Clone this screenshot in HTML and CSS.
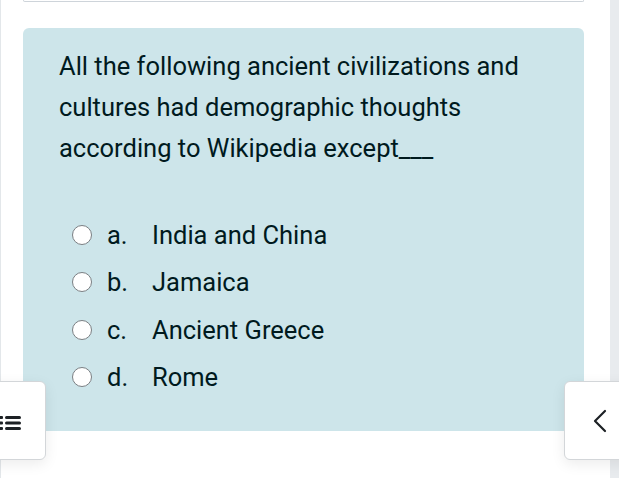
FILE: index.html
```html
<!DOCTYPE html>
<html>
<head>
<meta charset="utf-8">
<link rel="stylesheet" href="styles.css">
</head>
<body>
<div class="page">
  <div class="edge-left"></div>
  <main class="main">
    <div class="info-tail"></div>
    <div class="formulation">
      <div class="qtext">All the following ancient civilizations and cultures had demographic thoughts according to Wikipedia except___</div>
      <div class="answers">
        <div class="opt"><span class="radio"></span><span class="letter">a.</span><span class="label">India and China</span></div>
        <div class="opt"><span class="radio"></span><span class="letter">b.</span><span class="label">Jamaica</span></div>
        <div class="opt"><span class="radio"></span><span class="letter">c.</span><span class="label">Ancient Greece</span></div>
        <div class="opt"><span class="radio"></span><span class="letter">d.</span><span class="label">Rome</span></div>
      </div>
    </div>
  </main>
  <div class="edge-right"></div>
</div>
<button class="drawer-toggle toggle-left" aria-label="Open course index">
  <svg width="24" height="20" viewBox="0 0 24 20">
    <rect x="0" y="5" width="4" height="3" rx="1" fill="#1d2125"/>
    <rect x="0" y="10.5" width="4" height="3" rx="1" fill="#1d2125"/>
    <rect x="0" y="16" width="4" height="3" rx="1" fill="#1d2125"/>
    <rect x="6" y="5" width="16" height="3" rx="1.5" fill="#1d2125"/>
    <rect x="6" y="10.5" width="16" height="3" rx="1.5" fill="#1d2125"/>
    <rect x="6" y="16" width="16" height="3" rx="1.5" fill="#1d2125"/>
  </svg>
</button>
<button class="drawer-toggle toggle-right" aria-label="Open block drawer">
  <svg width="14" height="24" viewBox="0 0 14 24">
    <polyline points="12,2 2,12 12,22" fill="none" stroke="#1d2125" stroke-width="2.2" stroke-linecap="round" stroke-linejoin="round"/>
  </svg>
</button>
</body>
</html>
```

FILE: styles.css
```css
html, body {
  margin: 0;
  padding: 0;
  background: #ffffff;
  overflow: hidden;
}

body {
  width: 619px;
  height: 478px;
  font-family: Roboto, "Liberation Sans", sans-serif;
  color: #001a1e;
}

.page {
  display: flex;
  height: 478px;
}

.edge-left {
  width: 1px;
  flex: none;
  background: #e3e7ea;
}

.edge-right {
  width: 9px;
  flex: none;
  background: #e8ebee;
}

.main {
  flex: 1;
  padding: 0 26px 0 22px;
}

.info-tail {
  height: 1px;
  border: 1px solid #ced4da;
  border-top: none;
  border-radius: 0 0 4px 4px;
}

.formulation {
  margin-top: 26px;
  background: #cde5ea;
  border-radius: 6px;
  padding: 18px 40px 30px 36px;
  height: 355px;
}

.qtext {
  font-size: 25.5px;
  line-height: 41px;
  margin-bottom: 42px;
}

.answers {
  padding-left: 13px;
}

.opt {
  display: flex;
  align-items: center;
  height: 47.5px;
  font-size: 25.5px;
}

.radio {
  width: 18px;
  height: 18px;
  border: 1.5px solid #7b7f83;
  border-radius: 50%;
  background: #ffffff;
  flex: none;
  margin-right: 15px;
}

.letter {
  width: 45px;
  flex: none;
}

.drawer-toggle {
  position: absolute;
  top: 381px;
  width: 72px;
  height: 79px;
  background: #ffffff;
  border: 1px solid #d3d6d9;
  border-radius: 6px;
  box-shadow: 0 4px 14px rgba(0, 0, 0, 0.08);
  display: flex;
  align-items: center;
  justify-content: center;
  padding: 0;
}

.toggle-left {
  left: -26px;
}

.toggle-left svg {
  margin-left: 2px;
}

.toggle-right {
  left: 564px;
  justify-content: flex-start;
  padding-left: 28px;
}
```
